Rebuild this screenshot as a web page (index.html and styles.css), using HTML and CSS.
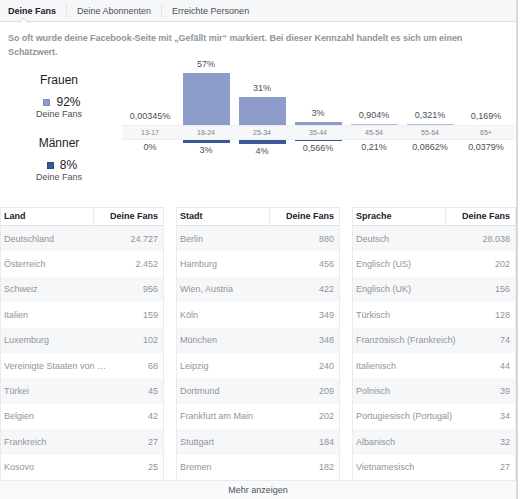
FILE: index.html
```html
<!DOCTYPE html>
<html lang="de">
<head>
<meta charset="utf-8">
<title>Deine Fans</title>
<link rel="stylesheet" href="styles.css">
</head>
<body>
<div class="page">
  <div class="tabs">
    <div class="tab active">Deine Fans</div>
    <div class="tab">Deine Abonnenten</div>
    <div class="tab">Erreichte Personen</div>
  </div>
  <p class="desc">So oft wurde deine Facebook-Seite mit „Gefällt mir“ markiert. Bei dieser Kennzahl handelt es sich um einen Schätzwert.</p>
  <div class="demo">
    <div class="gender">
      <div class="g-name">Frauen</div>
      <div class="g-val"><span class="sw sw-f"></span>92%</div>
      <div class="g-sub">Deine Fans</div>
      <div class="g-name g-m">Männer</div>
      <div class="g-val"><span class="sw sw-m"></span>8%</div>
      <div class="g-sub">Deine Fans</div>
    </div>
    <div class="chart">
      <div class="col">
        <div class="top"><span class="lbl">0,00345%</span><span class="bar f" style="height:0px"></span></div>
        <div class="band">13-17</div>
        <div class="bot"><span class="bar m" style="height:0px"></span><span class="lbl">0%</span></div>
      </div>
      <div class="col">
        <div class="top"><span class="lbl">57%</span><span class="bar f" style="height:53px"></span></div>
        <div class="band">18-24</div>
        <div class="bot"><span class="bar m" style="height:3px"></span><span class="lbl">3%</span></div>
      </div>
      <div class="col">
        <div class="top"><span class="lbl">31%</span><span class="bar f" style="height:28px"></span></div>
        <div class="band">25-34</div>
        <div class="bot"><span class="bar m" style="height:4px"></span><span class="lbl">4%</span></div>
      </div>
      <div class="col">
        <div class="top"><span class="lbl">3%</span><span class="bar f" style="height:3px"></span></div>
        <div class="band">35-44</div>
        <div class="bot"><span class="bar m" style="height:1px"></span><span class="lbl">0,566%</span></div>
      </div>
      <div class="col">
        <div class="top"><span class="lbl">0,904%</span><span class="bar f faint" style="height:1px"></span></div>
        <div class="band">45-54</div>
        <div class="bot"><span class="bar m" style="height:0px"></span><span class="lbl">0,21%</span></div>
      </div>
      <div class="col">
        <div class="top"><span class="lbl">0,321%</span><span class="bar f faint" style="height:1px"></span></div>
        <div class="band">55-64</div>
        <div class="bot"><span class="bar m" style="height:0px"></span><span class="lbl">0,0862%</span></div>
      </div>
      <div class="col">
        <div class="top"><span class="lbl">0,169%</span><span class="bar f" style="height:0px"></span></div>
        <div class="band">65+</div>
        <div class="bot"><span class="bar m" style="height:0px"></span><span class="lbl">0,0379%</span></div>
      </div>
    </div>
  </div>
  <div class="tables">
    <div class="tbl">
      <div class="th"><span class="th-name">Land</span><span class="th-num">Deine Fans</span></div>
      <div class="tr"><span>Deutschland</span><span>24.727</span></div>
      <div class="tr"><span>Österreich</span><span>2.452</span></div>
      <div class="tr"><span>Schweiz</span><span>956</span></div>
      <div class="tr"><span>Italien</span><span>159</span></div>
      <div class="tr"><span>Luxemburg</span><span>102</span></div>
      <div class="tr"><span>Vereinigte Staaten von …</span><span>68</span></div>
      <div class="tr"><span>Türkei</span><span>45</span></div>
      <div class="tr"><span>Belgien</span><span>42</span></div>
      <div class="tr"><span>Frankreich</span><span>27</span></div>
      <div class="tr"><span>Kosovo</span><span>25</span></div>
    </div>
    <div class="tbl">
      <div class="th"><span class="th-name">Stadt</span><span class="th-num">Deine Fans</span></div>
      <div class="tr"><span>Berlin</span><span>880</span></div>
      <div class="tr"><span>Hamburg</span><span>456</span></div>
      <div class="tr"><span>Wien, Austria</span><span>422</span></div>
      <div class="tr"><span>Köln</span><span>349</span></div>
      <div class="tr"><span>München</span><span>348</span></div>
      <div class="tr"><span>Leipzig</span><span>240</span></div>
      <div class="tr"><span>Dortmund</span><span>209</span></div>
      <div class="tr"><span>Frankfurt am Main</span><span>202</span></div>
      <div class="tr"><span>Stuttgart</span><span>184</span></div>
      <div class="tr"><span>Bremen</span><span>182</span></div>
    </div>
    <div class="tbl">
      <div class="th"><span class="th-name">Sprache</span><span class="th-num">Deine Fans</span></div>
      <div class="tr"><span>Deutsch</span><span>28.038</span></div>
      <div class="tr"><span>Englisch (US)</span><span>202</span></div>
      <div class="tr"><span>Englisch (UK)</span><span>156</span></div>
      <div class="tr"><span>Türkisch</span><span>128</span></div>
      <div class="tr"><span>Französisch (Frankreich)</span><span>74</span></div>
      <div class="tr"><span>Italienisch</span><span>44</span></div>
      <div class="tr"><span>Polnisch</span><span>39</span></div>
      <div class="tr"><span>Portugiesisch (Portugal)</span><span>34</span></div>
      <div class="tr"><span>Albanisch</span><span>32</span></div>
      <div class="tr"><span>Vietnamesisch</span><span>27</span></div>
    </div>
  </div>
  <div class="more">Mehr anzeigen</div>
</div>
</body>
</html>
```

FILE: styles.css
```css
* { box-sizing: border-box; }
html, body { margin: 0; padding: 0; background: #fff; }
body { font-family: "Liberation Sans", Arial, sans-serif; color: #1d2129; }

.page {
  width: 518px;
  height: 499px;
  border-right: 2px solid #d6d9de;
  display: flex;
  flex-direction: column;
  overflow: hidden;
}

.tabs {
  height: 22px;
  flex: none;
  background: #f6f7f9;
  border-bottom: 1px solid #dddfe2;
  display: flex;
  align-items: center;
  position: relative;
}
.tab {
  font-size: 9px;
  color: #4b4f56;
  padding: 0 10px;
  line-height: 14px;
  border-left: 1px solid #e3e5e8;
  position: relative;
}
.tab:first-child { border-left: none; padding-left: 8px; }
.tab.active { font-weight: bold; color: #1d2129; }
.tab.active::after {
  content: "";
  position: absolute;
  left: 20px;
  bottom: -8px;
  width: 6px;
  height: 6px;
  background: #fff;
  border-left: 1px solid #dddfe2;
  border-top: 1px solid #dddfe2;
  transform: rotate(45deg);
}

.desc {
  margin: 0;
  padding: 9px 30px 0 8px;
  font-size: 9px;
  font-weight: bold;
  line-height: 14px;
  letter-spacing: -0.05px;
  color: #90949c;
  height: 37px;
  flex: none;
}

.demo {
  height: 148px;
  flex: none;
  display: flex;
}
.gender {
  width: 122px;
  flex: none;
  display: flex;
  flex-direction: column;
  align-items: center;
  padding-top: 14px;
  padding-right: 4px;
}
.g-name { font-size: 12px; line-height: 14px; color: #1d2129; }
.g-m { margin-top: 17px; }
.g-val {
  margin-top: 9px;
  font-size: 12px;
  line-height: 12px;
  color: #1d2129;
  display: flex;
  align-items: center;
  padding-left: 6px;
}
.sw { width: 7px; height: 7px; margin-right: 6px; display: inline-block; margin-top: 1px; }
.sw-f { background: #8d9cc8; border: 1px solid #7f8fbd; }
.sw-m { background: #3b5998; border: 1px solid #2f4a83; }
.g-sub { font-size: 9px; line-height: 10px; margin-top: 1px; color: #4b4f56; }

.chart { display: flex; }
.col { width: 56px; display: flex; flex-direction: column; }
.top {
  height: 66px;
  display: flex;
  flex-direction: column;
  justify-content: flex-end;
  align-items: center;
}
.lbl { font-size: 9px; line-height: 11px; color: #4b4f56; white-space: nowrap; }
.top .lbl { margin-bottom: 3px; }
.bot { display: flex; flex-direction: column; align-items: center; }
.bot .lbl { margin-top: 2px; }
.bar { width: 47px; display: block; }
.bar.f { background: #8d9cc8; }
.bar.faint { background: #b7bfd6; }
.bar.m { background: #3b5998; }
.band {
  height: 15px;
  background: #f6f7f9;
  border-top: 1px solid #eceef1;
  border-bottom: 1px solid #eceef1;
  font-size: 7px;
  line-height: 13px;
  text-align: center;
  color: #7f8389;
}

.tables {
  display: grid;
  grid-template-columns: 1fr 1fr 1fr;
  column-gap: 12px;
  width: 516px;
  flex: none;
}
.tbl {
  border-left: 1px solid #e9ebee;
  border-right: 1px solid #e9ebee;
}
.th {
  height: 19px;
  border-top: 1px solid #e9ebee;
  border-bottom: 1px solid #dddfe2;
  display: flex;
  font-size: 9px;
  font-weight: bold;
  line-height: 17px;
  color: #1d2129;
}
.th-name { flex: 1; padding-left: 3px; }
.th-num {
  width: 70px;
  text-align: right;
  padding-right: 5px;
  border-left: 1px solid #e9ebee;
}
.tr {
  height: 25.4px;
  display: flex;
  justify-content: space-between;
  align-items: center;
  padding: 0 5px 0 3px;
  font-size: 9px;
  color: #90949c;
  white-space: nowrap;
}
.tr:nth-of-type(2n) { background: #f6f7f9; }

.more {
  flex: 1;
  border-top: 1px solid #e9ebee;
  background: #f9fafb;
  font-size: 9px;
  color: #4b4f56;
  text-align: center;
  line-height: 19px;
  width: 516px;
}
```
